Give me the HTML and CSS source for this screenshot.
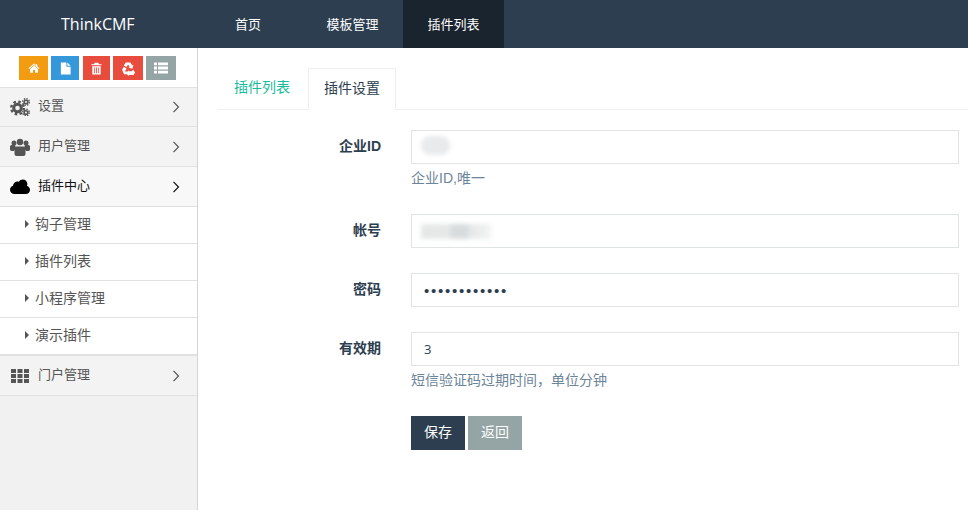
FILE: index.html
```html
<!DOCTYPE html>
<html lang="zh-CN">
<head>
<meta charset="utf-8">
<title>ThinkCMF</title>
<link rel="stylesheet" href="styles.css">
</head>
<body>
<header class="topbar">
  <a class="brand">ThinkCMF</a>
  <nav class="topnav">
    <a class="topnav-item first">首页</a>
    <a class="topnav-item">模板管理</a>
    <a class="topnav-item active">插件列表</a>
  </nav>
</header>
<div class="layout">
  <aside class="sidebar">
    <div class="shortcuts">
      <a class="sbtn orange w29"><svg viewBox="0 0 14 14" class="sicon"><path d="M7 1.800.6 7.200l.8.9L7 3.400l5.600 4.700.8-.9-2.600-2.200V2.500H9.300v1.300z"/><path d="M7 4.500 2.400 8.300V12.500h3.400V9.300h2.400v3.200h3.400V8.300z"/></svg></a>
      <a class="sbtn blue w28"><svg viewBox="0 0 14 14" class="sicon big"><path d="M2 .5h6v4.500h4.500v8.500H2z"/><path d="M9 .5l3.500 3.500H9z"/></svg></a>
      <a class="sbtn red w27 gap-left"><svg viewBox="0 0 14 14" class="sicon big"><path d="M5 .8h4l.7 1.500h2.800v1.300h-11V2.300h2.800zM2.500 4.500h9v9h-9zM4.600 6v6h.9V6zm2 0v6h.9V6zm1.900 0v6h.9V6z" fill-rule="evenodd"/></svg></a>
      <a class="sbtn red2 w30"><svg viewBox="0 0 16 16" class="sicon wide"><path d="M5 1.500h5l2 3.300 1.400-.8-1.300 4.200-4.200-1 1.400-.8L7.500 3.800 6 6.400 3 4.700zM1.200 9.300 3 6.200 6 8l-2 3.300h3V14H3.200zM8.300 11h3.400l1.200-2 2.100 3.300L13.400 15H8.300v1.500L5.700 13l2.600-3.500z"/></svg></a>
      <a class="sbtn gray w30"><svg viewBox="0 0 14 12" class="sicon list"><path d="M0 .5h3v2.700H0zM4 .5h10v2.700H4zM0 4.600h3v2.800H0zM4 4.600h10v2.800H4zM0 8.800h3v2.700H0zM4 8.800h10v2.700H4z"/></svg></a>
    </div>
    <ul class="menu">
      <li class="menu-item h39">
        <svg class="micon" viewBox="0 0 20 18"><g fill="none" stroke="#555"><circle cx="7.500" cy="10" r="3.800" stroke-width="3"/><circle cx="7.500" cy="10" r="6.300" stroke-width="2.400" stroke-dasharray="2.600 2.350"/><circle cx="16" cy="4" r="1.800" stroke-width="1.600"/><circle cx="16" cy="4" r="3.300" stroke-width="1.400" stroke-dasharray="1.400 1.190"/><circle cx="16" cy="14.500" r="1.800" stroke-width="1.600"/><circle cx="16" cy="14.500" r="3.300" stroke-width="1.400" stroke-dasharray="1.400 1.190"/></g></svg>
        <span class="mlabel">设置</span>
        <svg class="chev" viewBox="0 0 8 12"><path d="M.5 .8l5 5.200-5 5.200" fill="none" stroke="currentColor" stroke-width="1.200"/></svg>
      </li>
      <li class="menu-item">
        <svg class="micon" viewBox="0 0 20 18"><g fill="#555"><circle cx="4" cy="5" r="2.500"/><circle cx="16" cy="5" r="2.500"/><circle cx="10" cy="4" r="3.200"/><path d="M0 8.500c0-1 1-1.500 2-1.500h3l1 3-2 3H1.500C.5 13 0 12 0 11zM20 8.500c0-1-1-1.500-2-1.500h-3l-1 3 2 3h2.500c1 0 1.500-1 1.500-2z"/><path d="M6.500 8.500h7c1.500 0 2 1 2 2.500v5c0 1-1 2-2 2h-7c-1 0-2-1-2-2v-5c0-1.500.5-2.500 2-2.500z"/></g></svg>
        <span class="mlabel">用户管理</span>
        <svg class="chev" viewBox="0 0 8 12"><path d="M.5 .8l5 5.200-5 5.200" fill="none" stroke="currentColor" stroke-width="1.200"/></svg>
      </li>
      <li class="menu-item open">
        <svg class="micon" viewBox="0 0 20 15"><path fill="#000" d="M4.500 14.500C2 14.500 0 12.700 0 10.300c0-1.900 1.200-3.400 3-4C3.200 3.800 5.200 2 7.500 2c.5 0 1 .1 1.400.3C9.800.9 11.300 0 12.800 0c2.600 0 4.500 2 4.600 4.500-.1.700-.2 1-.4 1.700 1.800.7 3 2.300 3 4.200 0 2.300-1.900 4.100-4.500 4.100z"/></svg>
        <span class="mlabel">插件中心</span>
        <svg class="chev" viewBox="0 0 8 12"><path d="M.5 .8l5 5.200-5 5.200" fill="none" stroke="currentColor" stroke-width="1.200"/></svg>
      </li>
      <li class="sub-item"><i class="caret"></i>钩子管理</li>
      <li class="sub-item"><i class="caret"></i>插件列表</li>
      <li class="sub-item"><i class="caret"></i>小程序管理</li>
      <li class="sub-item last"><i class="caret"></i>演示插件</li>
      <li class="menu-item">
        <svg class="micon" viewBox="0 0 20 16"><path fill="#555" d="M1 1h5v4H1zM7.500 1h5v4h-5zM14 1h5v4h-5zM1 6h5v4H1zM7.500 6h5v4h-5zM14 6h5v4h-5zM1 11h5v4H1zM7.500 11h5v4h-5zM14 11h5v4h-5z"/></svg>
        <span class="mlabel">门户管理</span>
        <svg class="chev" viewBox="0 0 8 12"><path d="M.5 .8l5 5.200-5 5.200" fill="none" stroke="currentColor" stroke-width="1.200"/></svg>
      </li>
    </ul>
  </aside>
  <main class="content">
    <ul class="tabs">
      <li class="tab">插件列表</li>
      <li class="tab current">插件设置</li>
    </ul>
    <form class="form">
      <div class="row">
        <label class="flabel">企业ID</label>
        <div class="field">
          <div class="input-wrap"><input class="input" type="text"><span class="blur blur-id"></span></div>
          <p class="help">企业ID,唯一</p>
        </div>
      </div>
      <div class="row">
        <label class="flabel">帐号</label>
        <div class="field">
          <div class="input-wrap"><input class="input" type="text"><span class="blur blur-acct"></span></div>
        </div>
      </div>
      <div class="row">
        <label class="flabel">密码</label>
        <div class="field">
          <input class="input pass" type="password" value="abcdefghijkl">
        </div>
      </div>
      <div class="row">
        <label class="flabel">有效期</label>
        <div class="field">
          <input class="input" type="text" value="3">
          <p class="help">短信验证码过期时间，单位分钟</p>
        </div>
      </div>
      <div class="actions">
        <button class="btn primary" type="button">保存</button>
        <button class="btn muted" type="button">返回</button>
      </div>
    </form>
  </main>
</div>
</body>
</html>
```

FILE: styles.css
```css
* { box-sizing: border-box; }
html, body { margin: 0; padding: 0; height: 100%; overflow: hidden; }
body {
  font-family: "Noto Sans CJK SC", "Liberation Sans", sans-serif;
  font-size: 13px;
  color: #2c3e50;
  background: #fff;
}
ul { list-style: none; margin: 0; padding: 0; }

.topbar { display: flex; height: 48px; background: #2c3e50; color: #fff; }
.brand {
  width: 198px;
  padding-left: 61px;
  font: 16px/48px "Open Sans", "Liberation Sans", sans-serif;
}
.topnav { display: flex; }
.topnav-item { padding: 0 24.500px; line-height: 48px; }
.topnav-item.first { padding: 0 41px 0 37px; }
.topnav-item.active { background: #1a242f; }

.layout { display: flex; height: 462px; }
.sidebar { width: 198px; flex: none; background: #f1f1f1; border-right: 1px solid #d5d5d5; }
.shortcuts {
  display: flex;
  gap: 3px;
  height: 40px;
  padding: 8px 0 7px 19px;
  background: #fff;
  border-bottom: 1px solid #e1e1e1;
}
.sbtn { display: flex; align-items: center; justify-content: center; height: 24px; }
.gap-left { margin-left: 1px; }
.w27 { width: 27px; } .w28 { width: 28px; } .w29 { width: 29px; } .w30 { width: 30px; }
.orange { background: #f39c12; }
.blue { background: #3498db; }
.red { background: #e74c3c; }
.red2 { background: #e74c3c; }
.gray { background: #95a5a6; }
.sicon { width: 12px; height: 12px; fill: #fff; }
.sicon.big { width: 13px; height: 13px; }
.sicon.wide { width: 15px; height: 15px; }
.sicon.list { width: 14px; height: 12px; }

.menu-item {
  display: flex;
  align-items: center;
  height: 40px;
  padding: 0 16px 0 10px;
  background: #f3f3f3;
  border-bottom: 1px solid #e1e1e1;
  color: #555;
}
.menu-item.h39 { height: 39px; }
.menu-item.open { background: #f8f8f8; color: #111; }
.micon { width: 20px; height: 18px; flex: none; }
.mlabel { margin: 0 0 5px 8px; flex: 1; }
.chev { width: 8px; height: 12px; color: #555; }
.open .chev { color: #111; }

.sub-item {
  display: flex;
  align-items: center;
  height: 37px;
  padding: 0 0 4px 25px;
  background: #fff;
  border-bottom: 1px solid #e1e1e1;
  color: #555;
  font-size: 14px;
}
.sub-item.last { height: 38px; border-bottom-width: 2px; }
.caret {
  width: 0;
  height: 0;
  margin: 2px 6px 0 0;
  border-left: 4px solid #555;
  border-top: 4px solid transparent;
  border-bottom: 4px solid transparent;
}

.content { flex: 1; min-width: 0; padding: 20px 9px 0 20px; }
.tabs { display: flex; height: 42px; margin-right: -9px; border-bottom: 1px solid #ecf0f1; }
.tab {
  width: 90px;
  height: 41px;
  padding-right: 2px;
  font-size: 14px;
  line-height: 37px;
  text-align: center;
  color: #18bc9c;
}
.tab.current {
  width: 88px;
  height: 42px;
  padding-right: 0;
  background: #fff;
  color: #2c3e50;
  border: 1px solid #ecf0f1;
  border-bottom: 0;
}

.form { padding-top: 20px; }
.row {
  display: grid;
  grid-template-columns: 163px 1fr;
  column-gap: 30px;
  margin-bottom: 25px;
}
.flabel {
  font-family: "Liberation Sans", "Noto Sans CJK SC", sans-serif;
  font-size: 14px;
  font-weight: 700;
  text-align: right;
  line-height: 33px;
}
.field { min-width: 0; }
.input-wrap { position: relative; }
.input {
  display: block;
  width: 100%;
  height: 34px;
  padding: 0 12px;
  border: 1px solid #e1e4e5;
  outline: 0;
  background: #fff;
  color: #2c3e50;
  font: 13px "Open Sans", "Liberation Sans", sans-serif;
}
.input.pass { font: 15px "Liberation Sans", sans-serif; letter-spacing: 1.750px; }
.help {
  margin: 3px 0 0;
  height: 22px;
  font-family: "Liberation Sans", "Noto Sans CJK SC", sans-serif;
  font-size: 14px;
  line-height: 22px;
  color: #6c8599;
}
.blur { position: absolute; background: #e8eaeb; filter: blur(2px); }
.blur-id { left: 10px; top: 6px; width: 29px; height: 19px; border-radius: 9px; }
.blur-acct { left: 10px; top: 10px; width: 70px; height: 15px; background: linear-gradient(90deg, #e6e8e8, #e6e8e8 40%, #d8dcdc 45%, #d8dcdc 65%, #e6e8e8 70%, #f3f4f4); }

.actions { display: flex; gap: 3px; padding-left: 193px; margin-top: 25px; }
.btn {
  width: 54px;
  height: 34px;
  border: 0;
  padding: 0 0 5px;
  color: #fff;
  font: inherit;
  font-size: 14px;
}
.btn.primary { background: #2c3e50; }
.btn.muted { background: #95a5a6; }
```
